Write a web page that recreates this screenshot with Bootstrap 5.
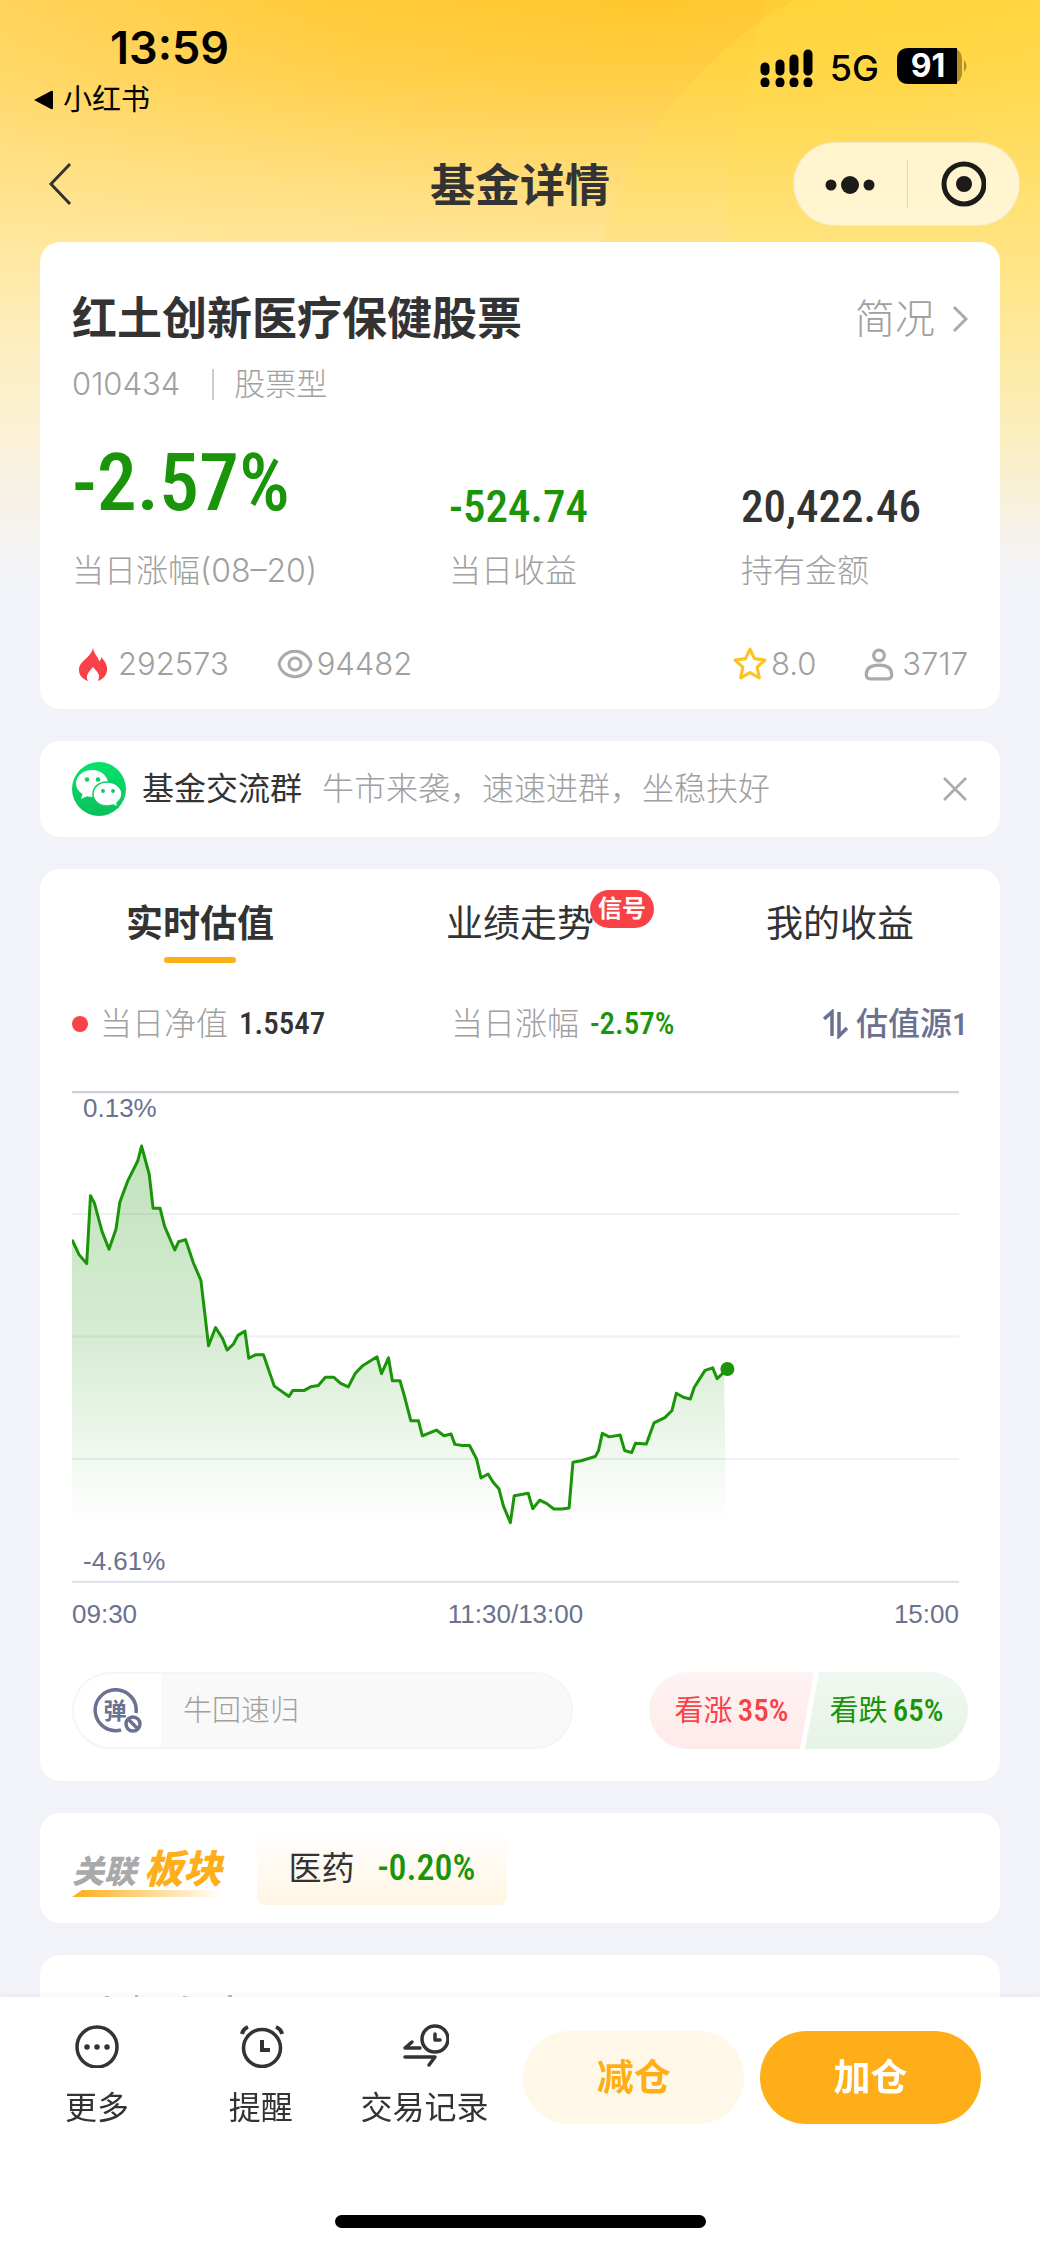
<!DOCTYPE html>
<html lang="zh-CN">
<head>
<meta charset="utf-8">
<meta name="viewport" content="width=device-width, initial-scale=1">
<title>基金详情</title>
<link rel="stylesheet" href="https://cdn.jsdelivr.net/npm/bootstrap@5.3.0/dist/css/bootstrap.min.css">
<style>
  :root { --ink:#333; --mute:#a0a0a0; --slate:#6b7190; --fall:#1a9408; --rise:#f94247; --brand:#fdae19; }
  body { font-family:Inter,"Noto Sans CJK SC",sans-serif; font-size:32px; line-height:40px; color:var(--ink); padding-bottom:253px; background:#f2f3f8; }
  .hero-bg { position:absolute; inset:0 0 auto 0; height:600px; z-index:-1; overflow:hidden;
    background:
      linear-gradient(180deg, rgba(255,238,180,0) 0, rgba(255,238,180,.15) 80px, rgba(255,236,175,.75) 240px, #fdefc4 360px, #f9f2e0 470px, #f2f3f8 580px),
      radial-gradient(ellipse 900px 520px at 62% 0, #ffc72c 0, #ffcb3a 35%, #ffdb74 100%); }
  .hero-bg::before { content:""; position:absolute; inset:0 0 auto 70%; height:560px; clip-path:polygon(38px 0,100% 0,100% 100%,0 100%,0 160px);
    background:linear-gradient(180deg, rgba(255,218,60,.3), rgba(255,226,110,.25) 300px, rgba(255,226,110,0)); }
  .hero-bg::after { content:""; position:absolute; width:840px; height:840px; border-radius:50%; left:56%; top:-55px;
    background:linear-gradient(180deg, rgba(255,222,60,.4), rgba(255,226,100,.3) 300px, rgba(255,226,110,0) 590px); }
  .status-bar { height:120px; padding:20px 71px 0 33px; color:#000; }
  .clock { font-size:45px; font-weight:600; line-height:56px; padding-left:77px; }
  .back-app { font-size:29px; line-height:32px; margin-top:8px; gap:10px; color:#000; }
  .net { font-size:36px; font-weight:500; }
  .app-nav { display:grid; grid-template-columns:1fr auto 1fr; align-items:center; padding:22px 20px 16px; }
  .app-title { font-size:45px; line-height:56px; font-weight:700; margin:0; padding-top:4px; }
  .capsule { width:227px; height:84px; border-radius:42px; background:rgba(255,255,255,.68); border:1px solid rgba(0,0,0,.05); }
  .capsule .btn { width:50%; height:48px; border:0; border-radius:0; }
  .capsule .btn + .btn { border-left:1px solid rgba(0,0,0,.12); }
  .stack { display:flex; flex-direction:column; gap:32px; padding:0 40px; }
  .panel { background:#fff; border:0; border-radius:20px; }
  .num { font-family:"Roboto Condensed",Roboto,"Noto Sans CJK SC",sans-serif; font-weight:500; }
  .mute { color:var(--mute); font-weight:300; }
  .fall { color:var(--fall); } .rise { color:var(--rise); }
  .summary { padding:49px 32px 25px; }
  .fund-name { font-size:45px; line-height:56px; font-weight:700; margin:0; }
  .brief { font-size:40px; gap:17px; }
  .code { font-size:31px; margin-top:17px; }
  .code .vr { width:2px; height:22px; background:#ccc; opacity:1; align-self:center; margin:0 20px 0 32px; }
  .figures { display:grid; grid-template-columns:377fr 292fr 227fr; align-items:end; margin-top:39px; }
  .fig-lg { font-size:80px; line-height:80px; }
  .fig-md { font-size:45px; line-height:32px; }
  .fig-label { margin-top:28px; }
  .stats { font-size:31px; margin-top:53px; }
  .notice { height:96px; padding:0 32px; }
  .chart-panel { padding-top:33px; padding-bottom:32px; }
  .tabs .nav-link { position:relative; display:flex; flex-direction:column; align-items:center; font-size:37px; line-height:44px; height:61px; padding:0; color:var(--ink); background:none; border:0; border-radius:0; }
  .tabs .nav-link.active { font-weight:700; background:none; color:var(--ink); }
  .tabs .nav-link.active::after { content:""; display:block; width:72px; height:6px; border-radius:3px; background:var(--brand); margin-top:11px; }
  .tip { position:absolute; left:calc(50% + 70px); top:-12px; height:38px; padding:0 8px; border-radius:19px; background:var(--rise); color:#fff; font-size:24px; line-height:37px; font-weight:700; }
  .quote { display:grid; grid-template-columns:379fr 300fr 217fr; align-items:center; line-height:48px; margin:37px 32px 0; }
  .quote .num { font-size:31px; margin-left:11px; }
  .dot { width:16px; height:16px; border-radius:50%; background:var(--rise); margin-right:12px; }
  .source { color:var(--slate); font-weight:500; white-space:nowrap; gap:7px; }
  .quote .source .num { font-size:32px; margin:0; }
  .plot { position:relative; margin:43px 41px 0 32px; }
  .plot svg { display:block; width:100%; height:492px; }
  .axis { font-family:"Liberation Sans",sans-serif; font-size:26px; line-height:30px; color:var(--slate); }
  .axis-y { position:absolute; left:11px; }
  .axis-top { top:2px; } .axis-bottom { bottom:7px; }
  .axis-x { margin:16px 41px 0 32px; }
  .actions { margin:43px 32px 0; }
  .danmu { width:501px; height:77px; border:2px solid #f5f5f5; border-radius:39px; overflow:hidden; background:#f9f9f9; }
  .danmu .btn { width:87px; background:#fff; border:0; border-radius:0; padding:0; }
  .danmu input { border:0; background:#f9f9f9; font-size:29px; font-weight:300; padding:0 22px; box-shadow:none; border-radius:0; }
  .danmu input::placeholder { color:var(--mute); }
  .vote { width:319px; height:77px; border-radius:39px; overflow:hidden; }
  .vote button { border:0; font-size:29px; white-space:nowrap; padding:0; height:77px; }
  .vote .num { font-size:31px; margin-left:-3px; }
  .vote-up { width:165px; background:linear-gradient(#fff3f3,#feeaea); clip-path:polygon(0 0,100% 0,calc(100% - 14px) 100%,0 100%); }
  .vote-down { width:163px; margin-left:-9px; background:linear-gradient(#f1f8f1,#e6f3e6); clip-path:polygon(14px 0,100% 0,100% 100%,0 100%); }
  .sector { height:110px; padding:0 32px; }
  .sector-mark { display:grid; grid-template-columns:auto auto; justify-content:space-between; align-items:baseline; width:150px; margin-top:12px; font-style:italic; font-weight:900; font-size:32px; line-height:36px; color:#a9a9a9; white-space:nowrap; }
  .sector-mark b { font-size:39px; font-weight:900; color:var(--brand); }
  .sector-mark i { grid-column:1/3; height:7px; background:linear-gradient(90deg,var(--brand),rgba(253,174,25,0)); clip-path:polygon(10px 0,100% 0,100% 100%,0 100%); }
  .sector-tag { width:250px; height:73px; margin:0 0 0 35px; border-radius:8px; background:linear-gradient(#fff,#fff5e3); gap:23px; color:var(--ink); text-decoration:none; }
  .sector-tag span:first-child { font-size:33px; }
  .sector-tag .num { font-size:36px; }
  .next-panel { height:43px; border-radius:20px 20px 0 0; overflow:hidden; }
  .dock { background:#fff; height:253px; box-shadow:0 -1px 6px rgba(0,0,0,.05); padding:25px 59px 0 15px; }
  .dock-row { display:grid; grid-template-columns:164fr 164fr 164fr 17fr 221fr 16fr 221fr; }
  .dock .tool { border:0; background:none; padding:0; color:var(--ink); white-space:nowrap; }
  .dock .tool svg { display:block; margin:0 auto 20px; }
  .dock .trade { height:93px; margin-top:9px; border-radius:47px; border:0; font-size:37px; font-weight:700; }
  .trade-out { background:#fff7e7; color:var(--brand); grid-column:5; }
  .trade-in { background:var(--brand); color:#fff; grid-column:7; }
  .home-wrap { margin:87px -59px 0 -15px; }
  .home-bar { width:371px; height:13px; border-radius:7px; background:#000; margin:0 auto; }
</style>
</head>
<body>
<div class="hero-bg"></div>
<header>
  <div class="status-bar d-flex justify-content-between">
    <div>
      <div class="clock">13:59</div>
      <a href="#" class="back-app d-flex align-items-center text-decoration-none"><svg width="20" height="20" viewBox="0 0 20 20"><path d="M1 10 18 1q2-1 2 1v16q0 2-2 1z"/></svg><span>小红书</span></a>
    </div>
    <div class="d-flex align-items-center align-self-start pt-4">
      <svg class="mt-1" width="54" height="38" viewBox="0 0 54 38"><g stroke="#000" stroke-width="9" stroke-linecap="round"><path d="M5 18v4M20 15v7M34 10v12M48 5v17M5 33v1M20 33v1M34 33v1M48 33v1"/></g></svg>
      <span class="net ms-3 me-3 mt-1">5G</span>
      <svg width="74" height="38" viewBox="0 0 74 38"><path d="M14 1h41q12 0 12 12v12q0 12-12 12H14Q2 37 2 25V13Q2 1 14 1" fill="#b18f2c"/><path d="M14 1h48v36H14Q2 37 2 25V13Q2 1 14 1"/><path d="M69 13q5 6 0 12z" fill="#b18f2c"/><text x="33" y="30" text-anchor="middle" font-family="Inter" font-weight="700" font-size="32" fill="#fff">91</text></svg>
    </div>
  </div>
  <nav class="app-nav">
    <a href="#" class="ps-4" aria-label="返回"><svg width="30" height="44" viewBox="0 0 30 44" fill="none" stroke="#333" stroke-width="3"><path d="M26 2 7 22l19 20"/></svg></a>
    <h1 class="app-title">基金详情</h1>
    <div class="capsule d-flex align-items-center ms-auto">
      <button class="btn p-0" aria-label="菜单"><svg width="52" height="20" viewBox="0 0 52 20" fill="#1b1b18"><circle cx="7" cy="9" r="5.500"/><circle cx="26" cy="9" r="9"/><circle cx="45" cy="9" r="5.500"/></svg></button>
      <button class="btn p-0" aria-label="关闭"><svg width="46" height="46" viewBox="0 0 46 46"><circle cx="24" cy="23" r="20" fill="none" stroke="#1b1b18" stroke-width="5"/><circle cx="24" cy="23" r="8" fill="#1b1b18"/></svg></button>
    </div>
  </nav>
</header>

<main class="stack">
  <section class="card panel summary">
    <div class="d-flex justify-content-between align-items-center">
      <h2 class="fund-name">红土创新医疗保健股票</h2>
      <a href="#" class="brief mute d-flex align-items-center text-decoration-none">简况<svg width="16" height="28" viewBox="0 0 16 28" fill="none" stroke="#aaa" stroke-width="3"><path d="m2 2 12 12L2 26"/></svg></a>
    </div>
    <div class="code mute d-flex align-items-center"><span>010434</span><span class="vr"></span><span>股票型</span></div>
    <div class="figures">
      <div><div class="num fig-lg fall">-2.57%</div><div class="fig-label mute">当日涨幅(08–20)</div></div>
      <div><div class="num fig-md fall">-524.74</div><div class="fig-label mute">当日收益</div></div>
      <div><div class="num fig-md">20,422.46</div><div class="fig-label mute">持有金额</div></div>
    </div>
    <div class="stats mute d-flex align-items-center">
      <svg class="ms-1 me-2" width="34" height="36" viewBox="0 0 34 36"><path d="M17 1c0 6 5 9 6 14 2-1 2-2 2-4 4 4 7 9 6 14-1 5-4 8-9 10 3-7-1-9-5-14-4 5-8 8-5 14-5-2-9-5-9-11C3 14 16 12 17 1" fill="#f94247"/></svg><span>292573</span>
      <svg class="ms-5 me-1" width="36" height="30" viewBox="0 0 36 30" fill="none" stroke="#aaa" stroke-width="3"><path d="M2 15C6-2 30-2 34 15 30 32 6 32 2 15z"/><circle cx="18" cy="15" r="6"/></svg><span>94482</span>
      <svg class="ms-auto me-1" width="34" height="34" viewBox="0 0 32 32" fill="none" stroke="#fcc326" stroke-width="3" stroke-linejoin="round"><path d="m16 2 4.200 9 9.800 1.300-7.200 6.700 1.900 10L16 24.200 7.300 29l1.900-10L2 12.300 11.800 11z"/></svg><span>8.0</span>
      <svg class="ms-5 me-2" width="30" height="34" viewBox="0 0 28 32" fill="none" stroke="#aaa" stroke-width="3"><circle cx="14" cy="8" r="5"/><path d="M7 30q-5 0-5-4 0-9 12-9t12 9q0 4-5 4z"/></svg><span>3717</span>
    </div>
  </section>

  <section class="card panel notice flex-row align-items-center">
    <svg width="54" height="54" viewBox="0 0 54 54"><defs><linearGradient id="wx" x1="0" y1="0" x2="0" y2="1"><stop offset="0" stop-color="#05e36b"/><stop offset="1" stop-color="#0bbf5b"/></linearGradient></defs><circle cx="27" cy="27" r="27" fill="url(#wx)"/><path d="M20 8c9 0 16 6 16 13.500S29 35 20 35q-3 0-5-.7L9 37l1.500-5Q4 28 4 21.500C4 14 11 8 20 8" fill="#fff"/><circle cx="15" cy="17.500" r="2.300" fill="#08d465"/><circle cx="26" cy="17.500" r="2.300" fill="#08d465"/><path d="M35 20c8 0 15 5 15 12q0 5-5 9l1 4-5-2q-3 1-6 1c-8 0-14-5-14-12s6-12 14-12" fill="#fff" stroke="#08cf62" stroke-width="1.500"/><circle cx="31" cy="29" r="1.900" fill="#08c95f"/><circle cx="41" cy="29" r="1.900" fill="#08c95f"/></svg>
    <span class="ms-3">基金交流群</span>
    <span class="mute ms-3 ps-1">牛市来袭，速速进群，坐稳扶好</span>
    <button class="btn border-0 p-0 ms-auto d-flex" aria-label="关闭提示"><svg width="26" height="26" viewBox="0 0 26 26" stroke="#aaa" stroke-width="2.500"><path d="m2 2 22 22M24 2 2 24"/></svg></button>
  </section>

  <section class="card panel chart-panel">
    <ul class="nav nav-justified tabs">
      <li class="nav-item"><button class="nav-link active w-100">实时估值</button></li>
      <li class="nav-item"><button class="nav-link w-100">业绩走势<span class="tip">信号</span></button></li>
      <li class="nav-item"><button class="nav-link w-100">我的收益</button></li>
    </ul>
    <div class="quote">
      <div class="d-flex align-items-center"><span class="dot"></span><span class="mute">当日净值</span><span class="num">1.5547</span></div>
      <div class="d-flex align-items-center"><span class="mute">当日涨幅</span><span class="num fall">-2.57%</span></div>
      <a href="#" class="source d-flex align-items-center justify-content-end text-decoration-none"><svg width="26" height="30" viewBox="0 0 26 30" fill="none" stroke="#6b7190" stroke-width="3.500"><path d="M1 10l8-7v24M16 3v24l8-8"/></svg><span>估值源<span class="num">1</span></span></a>
    </div>
    <div class="plot">
      <svg viewBox="66 32 1390 1377" preserveAspectRatio="none" role="img" aria-label="实时估值走势">
        <defs><linearGradient id="area" gradientUnits="userSpaceOnUse" x1="0" y1="186" x2="0" y2="1240"><stop offset="0" stop-color="#1a9408" stop-opacity=".27"/><stop offset=".5" stop-color="#1a9408" stop-opacity=".18"/><stop offset="1" stop-color="#1a9408" stop-opacity="0"/></linearGradient></defs>
        <g fill="none" stroke="#eff0f4" stroke-width="2"><path vector-effect="non-scaling-stroke" d="M66 376H1456"/><path vector-effect="non-scaling-stroke" d="M66 719H1456"/><path vector-effect="non-scaling-stroke" d="M66 1062H1456"/></g>
        <path d="M66 35H1456" stroke="#cdd0da" stroke-width="6"/><path d="M66 1406H1456" stroke="#dfe2e9" stroke-width="6"/>
        <path fill="url(#area)" d="M66 448 77 490 89 515 95 325 101 345 113 425 124 475 135 418 141 343 153 285 169 228 175 186 187 265 193 360H204L211 410 227 477 233 454 244 448 256 512 268 562 280 745 291 694 302 725 309 757 319 740 326 716 337 704 343 780 354 770H366L383 858 406 887 412 870H430L440 860 452 856 463 833H476L487 850 499 860 510 822 522 800 544 776 551 823 562 779 568 843H580L586 880 597 955H609L615 997 637 981 649 997 660 992 666 1021 678 1024H689L700 1062 707 1115 718 1104 726 1127 735 1145 742 1193 753 1240 759 1165 781 1158 788 1201 799 1177 810 1187 821 1202H834L845 1199 851 1071 864 1067 886 1055 891 1039 897 990 908 1000 925 995 932 1038 943 1044 949 1018 966 1020 978 961 995 946 1006 927 1013 878 1024 889 1035 894 1041 862 1058 814 1070 807 1077 837 1088 820 1091 1240H66z"/>
        <path fill="none" stroke="#1a9408" stroke-width="3" stroke-linejoin="round" vector-effect="non-scaling-stroke" d="M66 448 77 490 89 515 95 325 101 345 113 425 124 475 135 418 141 343 153 285 169 228 175 186 187 265 193 360H204L211 410 227 477 233 454 244 448 256 512 268 562 280 745 291 694 302 725 309 757 319 740 326 716 337 704 343 780 354 770H366L383 858 406 887 412 870H430L440 860 452 856 463 833H476L487 850 499 860 510 822 522 800 544 776 551 823 562 779 568 843H580L586 880 597 955H609L615 997 637 981 649 997 660 992 666 1021 678 1024H689L700 1062 707 1115 718 1104 726 1127 735 1145 742 1193 753 1240 759 1165 781 1158 788 1201 799 1177 810 1187 821 1202H834L845 1199 851 1071 864 1067 886 1055 891 1039 897 990 908 1000 925 995 932 1038 943 1044 949 1018 966 1020 978 961 995 946 1006 927 1013 878 1024 889 1035 894 1041 862 1058 814 1070 807 1077 837 1093 810"/>
        <path d="M1093 810h.01" stroke="#1a9408" stroke-width="14" stroke-linecap="round" vector-effect="non-scaling-stroke"/>
      </svg>
      <span class="axis axis-y axis-top">0.13%</span><span class="axis axis-y axis-bottom">-4.61%</span>
    </div>
    <div class="axis axis-x d-flex justify-content-between"><span>09:30</span><span>11:30/13:00</span><span>15:00</span></div>
    <div class="actions d-flex justify-content-between">
      <div class="danmu d-flex">
        <button class="btn flex-shrink-0" aria-label="弹幕开关"><svg width="50" height="46" viewBox="0 0 50 46" fill="none" stroke="#6b7190" stroke-width="3.500"><path d="M28 42A20.500 20.500 0 1 1 43 25"/><circle cx="40" cy="36" r="7"/><path d="m35 31 10 10"/><text x="22" y="31" text-anchor="middle" font-size="23" font-weight="700" fill="#6b7190" stroke="none">弹</text></svg></button>
        <input class="form-control h-100" type="text" placeholder="牛回速归" aria-label="弹幕内容">
      </div>
      <div class="vote d-flex">
        <button class="vote-up rise">看涨 <span class="num">35%</span></button>
        <button class="vote-down fall">看跌 <span class="num">65%</span></button>
      </div>
    </div>
  </section>

  <section class="card panel sector flex-row align-items-center">
    <div class="sector-mark"><span>关联</span><b>板块</b><i></i></div>
    <a href="#" class="sector-tag d-flex align-items-center justify-content-center"><span>医药</span><span class="num fall">-0.20%</span></a>
  </section>
  <section class="card panel next-panel">
    <svg class="mt-auto" width="240" height="3" viewBox="0 0 240 3" fill="#bbb"><path d="M65 1h4v2h-4zM95 0h3v3h-3zM143 1h4v2h-4zM188 0h4v3h-4z"/></svg>
  </section>
</main>

<footer class="dock fixed-bottom">
  <div class="dock-row">
    <button class="tool"><svg width="46" height="46" viewBox="0 0 46 46" fill="none" stroke="#333" stroke-width="3.500"><circle cx="23" cy="25" r="20"/><path d="M13 25h.01M23 25h.01M33 25h.01" stroke-width="5.500" stroke-linecap="round"/></svg>更多</button>
    <button class="tool"><svg width="46" height="46" viewBox="0 0 46 46" fill="none" stroke="#333" stroke-width="3.500"><circle cx="24" cy="26" r="18.500"/><path d="M24 18v10h8M4 12q1-5 6-7M44 12q-1-5-6-7" stroke-width="4"/></svg>提醒</button>
    <button class="tool"><svg width="48" height="46" viewBox="0 0 48 46" fill="none" stroke="#333" stroke-width="3.500" stroke-linecap="round" stroke-linejoin="round"><circle cx="34" cy="17" r="13"/><path d="M34 12v6h5M19 26H4l7-6M4 35h30l-6 8"/></svg>交易记录</button>
    <button class="btn trade trade-out">减仓</button>
    <button class="btn trade trade-in">加仓</button>
  </div>
  <div class="home-wrap"><div class="home-bar"></div></div>
</footer>
<script src="https://cdn.jsdelivr.net/npm/bootstrap@5.3.0/dist/js/bootstrap.bundle.min.js"></script>
</body>
</html>
